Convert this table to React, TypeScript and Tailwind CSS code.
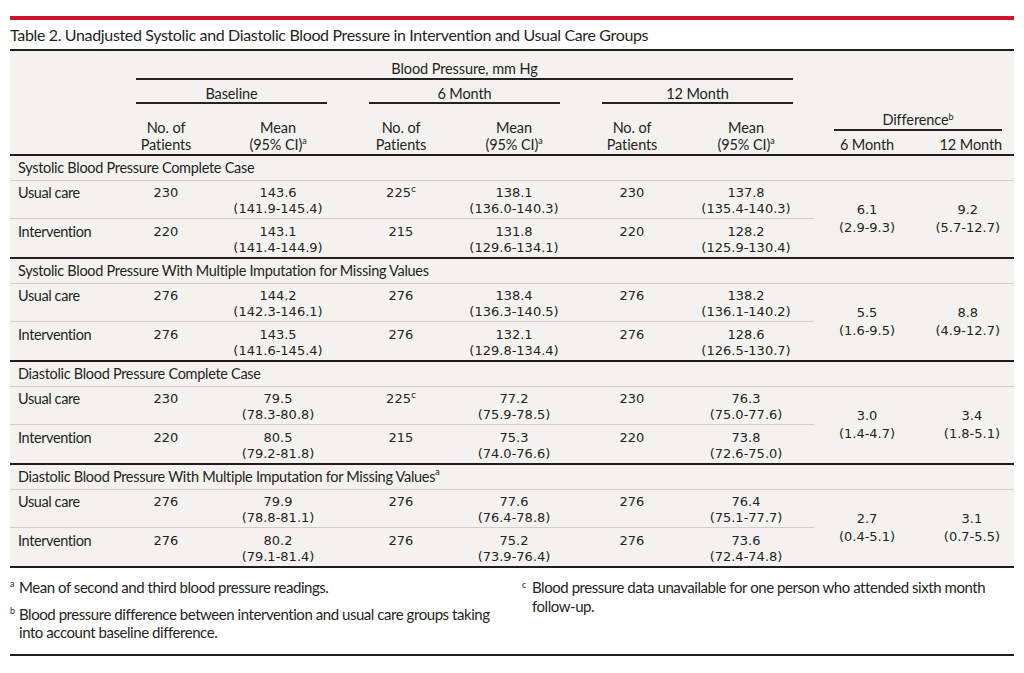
import React from 'react';

// Table 2 — presión arterial sin ajustar por grupo (reproducción estática).

const COLS = 'grid grid-cols-[126px_60px_164px_82px_144px_92px_136px_106px_88px]';
const LABEL_FONT = "font-['Lato','Liberation_Sans',sans-serif]";
const NUM_FONT = "font-['DejaVu_Sans','Liberation_Sans',sans-serif]";

type Row = {
  label: string;
  base: [string, string, string];
  m6: [string, string, string, boolean?];
  m12: [string, string, string];
};

type Section = {
  title: string;
  sup?: string;
  rows: [Row, Row];
  diff6: [string, string];
  diff12: [string, string];
};

const SECTIONS: Section[] = [
  {
    title: 'Systolic Blood Pressure Complete Case',
    rows: [
      {
        label: 'Usual care',
        base: ['230', '143.6', '(141.9-145.4)'],
        m6: ['225', '138.1', '(136.0-140.3)', true],
        m12: ['230', '137.8', '(135.4-140.3)'],
      },
      {
        label: 'Intervention',
        base: ['220', '143.1', '(141.4-144.9)'],
        m6: ['215', '131.8', '(129.6-134.1)'],
        m12: ['220', '128.2', '(125.9-130.4)'],
      },
    ],
    diff6: ['6.1', '(2.9-9.3)'],
    diff12: ['9.2', '(5.7-12.7)'],
  },
  {
    title: 'Systolic Blood Pressure With Multiple Imputation for Missing Values',
    rows: [
      {
        label: 'Usual care',
        base: ['276', '144.2', '(142.3-146.1)'],
        m6: ['276', '138.4', '(136.3-140.5)'],
        m12: ['276', '138.2', '(136.1-140.2)'],
      },
      {
        label: 'Intervention',
        base: ['276', '143.5', '(141.6-145.4)'],
        m6: ['276', '132.1', '(129.8-134.4)'],
        m12: ['276', '128.6', '(126.5-130.7)'],
      },
    ],
    diff6: ['5.5', '(1.6-9.5)'],
    diff12: ['8.8', '(4.9-12.7)'],
  },
  {
    title: 'Diastolic Blood Pressure Complete Case',
    rows: [
      {
        label: 'Usual care',
        base: ['230', '79.5', '(78.3-80.8)'],
        m6: ['225', '77.2', '(75.9-78.5)', true],
        m12: ['230', '76.3', '(75.0-77.6)'],
      },
      {
        label: 'Intervention',
        base: ['220', '80.5', '(79.2-81.8)'],
        m6: ['215', '75.3', '(74.0-76.6)'],
        m12: ['220', '73.8', '(72.6-75.0)'],
      },
    ],
    diff6: ['3.0', '(1.4-4.7)'],
    diff12: ['3.4', '(1.8-5.1)'],
  },
  {
    title: 'Diastolic Blood Pressure With Multiple Imputation for Missing Values',
    sup: 'a',
    rows: [
      {
        label: 'Usual care',
        base: ['276', '79.9', '(78.8-81.1)'],
        m6: ['276', '77.6', '(76.4-78.8)'],
        m12: ['276', '76.4', '(75.1-77.7)'],
      },
      {
        label: 'Intervention',
        base: ['276', '80.2', '(79.1-81.4)'],
        m6: ['276', '75.2', '(73.9-76.4)'],
        m12: ['276', '73.6', '(72.4-74.8)'],
      },
    ],
    diff6: ['2.7', '(0.4-5.1)'],
    diff12: ['3.1', '(0.7-5.5)'],
  },
];

function Sup({ children }: { children: React.ReactNode }) {
  return <sup className="top-[-0.6em] text-[9px]">{children}</sup>;
}

function Header() {
  return (
    <div
      className={`${COLS} ${LABEL_FONT} h-[103px] grid-rows-[29px_25px_49px] text-[14.5px] leading-[16px] tracking-[-0.1px]`}
    >
      {/* Blood Pressure, mm Hg */}
      <div className="col-span-6 col-start-2 row-start-1 pt-[10px] pr-[21px]">
        <div className="border-b-2 border-[#222] pb-[1px] text-center">Blood Pressure, mm Hg</div>
      </div>
      {/* Grupos de tiempo */}
      <div className="col-span-2 col-start-2 row-start-2 pt-[6px] pr-[33px]">
        <div className="border-b-2 border-[#222] text-center">Baseline</div>
      </div>
      <div className="col-span-2 col-start-4 row-start-2 pt-[6px] pr-[26px] pl-[9px]">
        <div className="border-b-2 border-[#222] text-center">6 Month</div>
      </div>
      <div className="col-span-2 col-start-6 row-start-2 pt-[6px] pr-[21px] pl-[16px]">
        <div className="border-b-2 border-[#222] text-center">12 Month</div>
      </div>
      {/* Sub-encabezados */}
      {['col-start-2', 'col-start-3', 'col-start-4', 'col-start-5', 'col-start-6', 'col-start-7'].map(
        (col, i) => (
          <div
            key={col}
            className={`row-start-3 flex items-end justify-center pb-[1px] text-center leading-[16.5px] ${col}`}
          >
            {i % 2 === 0 ? (
              <div>
                No. of
                <br />
                Patients
              </div>
            ) : (
              <div>
                Mean
                <br />
                (95% CI)<Sup>a</Sup>
              </div>
            )}
          </div>
        ),
      )}
      {/* Difference */}
      <div className="col-span-2 col-start-8 row-span-3 row-start-1 flex flex-col justify-end pb-[1px]">
        <div className="mr-[6px] ml-[20px] border-b-2 border-[#222] pb-[1px] text-center">
          Difference<Sup>b</Sup>
        </div>
        <div className="mt-[6px] grid grid-cols-[106px_88px]">
          <div className="text-center">6 Month</div>
          <div className="pr-[6px] text-right">12 Month</div>
        </div>
      </div>
    </div>
  );
}

function Cell({ n, sup }: { n: string; sup?: boolean }) {
  return (
    <div className={`${NUM_FONT} text-center text-[13px] leading-[16px]`}>
      {n}
      {sup ? <Sup>c</Sup> : null}
    </div>
  );
}

function MeanCell({ v, ci }: { v: string; ci: string }) {
  return (
    <div className={`${NUM_FONT} text-center text-[13px] leading-[16px]`}>
      {v}
      <br />
      {ci}
    </div>
  );
}

function DataRow({ row, pt }: { row: Row; pt: string }) {
  return (
    <>
      <div className={`${LABEL_FONT} ${pt} pl-[8px] text-[14.5px] leading-[16px] tracking-[-0.4px]`}>
        {row.label}
      </div>
      <div className={pt}>
        <Cell n={row.base[0]} />
      </div>
      <div className={pt}>
        <MeanCell v={row.base[1]} ci={row.base[2]} />
      </div>
      <div className={pt}>
        <Cell n={row.m6[0]} sup={row.m6[3]} />
      </div>
      <div className={pt}>
        <MeanCell v={row.m6[1]} ci={row.m6[2]} />
      </div>
      <div className={pt}>
        <Cell n={row.m12[0]} />
      </div>
      <div className={pt}>
        <MeanCell v={row.m12[1]} ci={row.m12[2]} />
      </div>
    </>
  );
}

function SectionBlock({ s }: { s: Section }) {
  return (
    <div>
      <div className={`${LABEL_FONT} flex h-[24px] items-center pl-[8px] text-[14.5px] tracking-[-0.3px]`}>
        {s.title}
        {s.sup ? <Sup>{s.sup}</Sup> : null}
      </div>
      <div className="h-px bg-[#cfcdc8]" />
      <div className={`${COLS} grid-rows-[37px_1px_38px]`}>
        <DataRow row={s.rows[0]} pt="pt-[4px]" />
        <div className="col-span-7 bg-[#cfcdc8]" />
        <DataRow row={s.rows[1]} pt="pt-[5px]" />
        <div
          className={`${NUM_FONT} col-start-8 row-span-3 row-start-1 flex items-center justify-center text-center text-[13px] leading-[18px]`}
        >
          <div>
            {s.diff6[0]}
            <br />
            {s.diff6[1]}
          </div>
        </div>
        <div
          className={`${NUM_FONT} col-start-9 row-span-3 row-start-1 flex items-center justify-end pr-[8px] text-center text-[13px] leading-[18px]`}
        >
          <div>
            {s.diff12[0]}
            <br />
            {s.diff12[1]}
          </div>
        </div>
      </div>
      <div className="h-[2px] bg-[#1e1e1e]" />
    </div>
  );
}

export default function App() {
  return (
    <div className="h-[673px] w-[1024px] bg-white px-[10px] pt-[16px] text-[#231f20]">
      <div className="h-[4px] bg-[#d3122f]" />
      <div className={`${LABEL_FONT} flex h-[29px] items-center text-[16px] tracking-[-0.35px]`}>
        Table 2. Unadjusted Systolic and Diastolic Blood Pressure in Intervention and Usual Care Groups
      </div>
      <div className="h-[2px] bg-[#1e1e1e]" />
      <div className="bg-[#f3f2ee]">
        <Header />
        <div className="h-[2px] bg-[#1e1e1e]" />
        {SECTIONS.map((s) => (
          <SectionBlock key={s.title} s={s} />
        ))}
      </div>
      {/* Notas al pie */}
      <div
        className={`${LABEL_FONT} grid grid-cols-[512px_1fr] pt-[10px] text-[15px] leading-[18px] tracking-[-0.45px]`}
      >
        <div className="pr-[14px]">
          <p className="relative pl-[9px]">
            <span className="absolute top-[-3px] left-0 text-[9px]">a</span>
            Mean of second and third blood pressure readings.
          </p>
          <p className="relative mt-[9px] pl-[9px]">
            <span className="absolute top-[-3px] left-0 text-[9px]">b</span>
            Blood pressure difference between intervention and usual care groups taking into account baseline
            difference.
          </p>
        </div>
        <div className="pr-[16px]">
          <p className="relative pl-[10px] leading-[19px]">
            <span className="absolute top-[-3px] left-0 text-[9px]">c</span>
            Blood pressure data unavailable for one person who attended sixth month follow-up.
          </p>
        </div>
      </div>
      <div className="mt-[13px] h-[2px] bg-[#1e1e1e]" />
    </div>
  );
}
